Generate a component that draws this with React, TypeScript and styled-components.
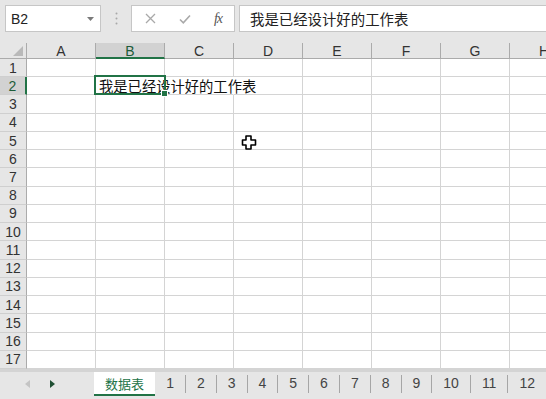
import styled, { createGlobalStyle } from "styled-components";

const GlobalStyle = createGlobalStyle`
  html, body {
    margin: 0;
    padding: 0;
    overflow: hidden;
  }
  body {
    font-family: "Liberation Sans", "Noto Sans CJK SC", sans-serif;
  }
`;

const GREEN = "#217346";
const CJK = `"Liberation Sans", "Noto Sans CJK SC", sans-serif`;

const Window = styled.div`
  width: 546px;
  height: 399px;
  display: flex;
  flex-direction: column;
  background: #e6e6e6;
  overflow: hidden;
`;

/* ---------- formula bar ---------- */

const FormulaBar = styled.div`
  height: 43px;
  flex: 0 0 auto;
  display: flex;
  align-items: flex-start;
  padding: 5px 0 0 5px;
  box-sizing: border-box;
`;

const Box = styled.div`
  height: 27px;
  box-sizing: border-box;
  background: #fff;
  border: 1px solid #c6c6c6;
  display: flex;
  align-items: center;
`;

const NameBox = styled(Box)`
  width: 96px;
  padding: 0 6px 0 5px;
  justify-content: space-between;
  font-size: 14px;
  color: #222;
`;

const Grip = styled.div`
  width: 30px;
  height: 27px;
  display: flex;
  align-items: center;
  justify-content: center;
`;

const FxButtons = styled(Box)`
  width: 104px;
  padding: 0 12px 0 13px;
  justify-content: space-between;
`;

const FxLabel = styled.span`
  font-family: "Liberation Serif", serif;
  font-style: italic;
  font-size: 14px;
  color: #555;
  letter-spacing: -1px;
`;

const FormulaInput = styled(Box)`
  flex: 1;
  margin-left: 4px;
  border-right: none;
  padding-left: 10px;
  font-family: ${CJK};
  font-size: 14.4px;
  color: #222;
`;

/* ---------- sheet grid ---------- */

const Sheet = styled.div`
  flex: 1;
  position: relative;
  display: grid;
  grid-template-columns: 27px repeat(8, 69px);
  grid-template-rows: 16px repeat(17, 18.24px);
  align-content: start;
  background: #fff;
  overflow: hidden;
  border-bottom: 3px solid #d4d4d4;
`;

const Corner = styled.div`
  background: #e6e6e6;
  border-right: 1px solid #ababab;
  border-bottom: 1px solid #ababab;
  box-sizing: border-box;
  position: relative;
`;

const ColHeader = styled.div<{ $active?: boolean }>`
  background: ${(p) => (p.$active ? "#d2d2d2" : "#e6e6e6")};
  border-right: 1px solid #ababab;
  border-bottom: ${(p) => (p.$active ? `2px solid ${GREEN}` : "1px solid #ababab")};
  box-sizing: border-box;
  display: flex;
  align-items: center;
  justify-content: center;
  font-size: 14px;
  color: ${(p) => (p.$active ? "#1d5c39" : "#333")};
  padding-top: ${(p) => (p.$active ? "1px" : "0")};
`;

const RowHeader = styled.div<{ $active?: boolean }>`
  background: ${(p) => (p.$active ? "#d2d2d2" : "#e6e6e6")};
  border-right: ${(p) => (p.$active ? `2px solid ${GREEN}` : "1px solid #ababab")};
  border-bottom: 1px solid #cfcfcf;
  box-sizing: border-box;
  display: flex;
  align-items: center;
  justify-content: center;
  font-size: 14px;
  color: ${(p) => (p.$active ? "#1d5c39" : "#333")};
`;

const Cell = styled.div<{ $open?: boolean }>`
  position: relative;
  border-right: 1px solid ${(p) => (p.$open ? "transparent" : "#d4d4d4")};
  border-bottom: 1px solid #d4d4d4;
  box-sizing: border-box;
  font-family: ${CJK};
  font-size: 14.3px;
  color: #111;
  white-space: nowrap;
  display: flex;
  align-items: center;
  padding-left: 3px;
`;

const CellText = styled.span`
  position: relative;
  z-index: 1;
`;

const Selection = styled.div`
  position: absolute;
  left: -2px;
  top: -2px;
  right: -2px;
  bottom: -1px;
  border: 2px solid ${GREEN};
  z-index: 2;
  pointer-events: none;
`;

const FillHandle = styled.div`
  position: absolute;
  right: -4px;
  bottom: -4px;
  width: 5px;
  height: 5px;
  background: ${GREEN};
  border: 1px solid #fff;
`;

const CursorMark = styled.svg`
  position: absolute;
  left: 241px;
  top: 92px;
  z-index: 3;
`;

/* ---------- sheet tabs ---------- */

const TabBar = styled.div`
  height: 27px;
  flex: 0 0 auto;
  display: flex;
  align-items: flex-start;
  background: #e6e6e6;
`;

const TabNav = styled.div`
  width: 96px;
  height: 24px;
  display: flex;
  align-items: center;
  padding-left: 25px;
  gap: 20px;
  box-sizing: border-box;
`;

const SheetTab = styled.div<{ $active?: boolean }>`
  height: 24px;
  box-sizing: border-box;
  padding: 0 11px;
  display: flex;
  align-items: center;
  font-family: ${CJK};
  font-size: ${(p) => (p.$active ? "13px" : "14px")};
  color: ${(p) => (p.$active ? GREEN : "#444")};
  background: ${(p) => (p.$active ? "#fff" : "transparent")};
  border-bottom: 2px solid ${(p) => (p.$active ? GREEN : "transparent")};
  white-space: nowrap;
`;

const TabSep = styled.div`
  width: 1px;
  height: 18px;
  margin-top: 3px;
  background: #a6a6a6;
  flex: 0 0 auto;
`;

const columns = ["A", "B", "C", "D", "E", "F", "G", "H"];
const rows = Array.from({ length: 17 }, (_, i) => i + 1);
const sheets = ["1", "2", "3", "4", "5", "6", "7", "8", "9", "10", "11", "12"];
const content = "我是已经设计好的工作表";

function Toolbar() {
  return (
    <FormulaBar>
      <NameBox>
        <span>B2</span>
        <svg width="7" height="4" viewBox="0 0 7 4">
          <path d="M0 0 L7 0 L3.5 4 Z" fill="#7a7a7a" />
        </svg>
      </NameBox>
      <Grip>
        <svg width="3" height="13" viewBox="0 0 3 13">
          <circle cx="1.5" cy="1.5" r="1" fill="#a8a8a8" />
          <circle cx="1.5" cy="6.5" r="1" fill="#a8a8a8" />
          <circle cx="1.5" cy="11.5" r="1" fill="#a8a8a8" />
        </svg>
      </Grip>
      <FxButtons>
        <svg width="11" height="11" viewBox="0 0 11 11">
          <path d="M1 1 L10 10 M10 1 L1 10" stroke="#a9a9a9" strokeWidth="1.3" />
        </svg>
        <svg width="12" height="10" viewBox="0 0 12 10">
          <path d="M1 5.5 L4.3 8.8 L11 1.5" stroke="#a9a9a9" strokeWidth="1.6" fill="none" />
        </svg>
        <FxLabel>fx</FxLabel>
      </FxButtons>
      <FormulaInput>{content}</FormulaInput>
    </FormulaBar>
  );
}

function Grid() {
  return (
    <Sheet>
      <Corner>
        <svg
          width="10"
          height="10"
          viewBox="0 0 10 10"
          style={{ position: "absolute", right: 3, bottom: 2 }}
        >
          <path d="M10 0 L10 10 L0 10 Z" fill="#b9b9b9" />
        </svg>
      </Corner>
      {columns.map((c) => (
        <ColHeader key={c} $active={c === "B"}>
          {c}
        </ColHeader>
      ))}
      {rows.map((r) => [
        <RowHeader key={`h${r}`} $active={r === 2}>
          {r}
        </RowHeader>,
        ...columns.map((c) => {
          const isB2 = r === 2 && c === "B";
          const open = r === 2 && (c === "B" || c === "C");
          return (
            <Cell key={`${c}${r}`} $open={open}>
              {isB2 && (
                <>
                  <CellText>{content}</CellText>
                  <Selection>
                    <FillHandle />
                  </Selection>
                </>
              )}
            </Cell>
          );
        }),
      ])}
      <CursorMark width="16" height="15" viewBox="0 0 16 15">
        <path
          d="M5 1 H10 V5 H14.5 V10 H10 V14 H5 V10 H1.5 V5 H5 Z"
          fill="#fff"
          stroke="#000"
          strokeWidth="1.6"
          strokeLinejoin="round"
        />
      </CursorMark>
    </Sheet>
  );
}

function Tabs() {
  return (
    <TabBar>
      <TabNav>
        <svg width="5" height="8" viewBox="0 0 5 8">
          <path d="M5 0 L5 8 L0 4 Z" fill="#c4c4c4" />
        </svg>
        <svg width="5" height="8" viewBox="0 0 5 8">
          <path d="M0 0 L0 8 L5 4 Z" fill="#1f4f33" />
        </svg>
      </TabNav>
      <SheetTab $active>数据表</SheetTab>
      {sheets.map((s, i) => [
        i > 0 && <TabSep key={`s${s}`} />,
        <SheetTab key={s}>{s}</SheetTab>,
      ])}
    </TabBar>
  );
}

export default function App() {
  return (
    <>
      <GlobalStyle />
      <Window>
        <Toolbar />
        <Grid />
        <Tabs />
      </Window>
    </>
  );
}
